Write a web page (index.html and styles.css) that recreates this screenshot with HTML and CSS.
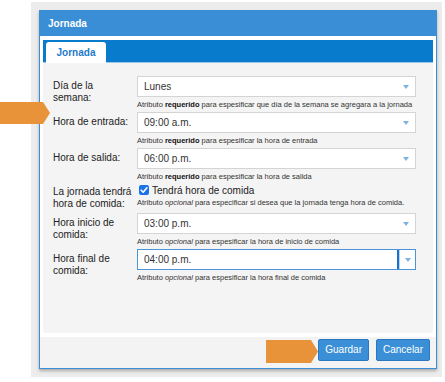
FILE: index.html
```html
<!DOCTYPE html>
<html lang="es">
<head>
<meta charset="utf-8">
<title>Jornada</title>
<link rel="stylesheet" href="styles.css">
</head>
<body>
<div class="stage">
  <div class="frame">
    <div class="dialog">
      <div class="dialog-title">Jornada</div>
      <div class="dialog-body">
        <div class="tabs">
          <div class="tab">Jornada</div>
        </div>
        <div class="panel">
          <div class="row">
            <div class="label">Día de la semana:</div>
            <div class="field">
              <div class="select"><span>Lunes</span><i class="caret"></i></div>
              <div class="help">Atributo <b>requerido</b> para espesificar que día de la semana se agregara a la jornada</div>
            </div>
          </div>
          <div class="row">
            <div class="label">Hora de entrada:</div>
            <div class="field">
              <div class="select"><span>09:00 a.m.</span><i class="caret"></i></div>
              <div class="help">Atributo <b>requerido</b> para espesificar la hora de entrada</div>
            </div>
          </div>
          <div class="row">
            <div class="label">Hora de salida:</div>
            <div class="field">
              <div class="select"><span>06:00 p.m.</span><i class="caret"></i></div>
              <div class="help">Atributo <b>requerido</b> para espesificar la hora de salida</div>
            </div>
          </div>
          <div class="row row-check">
            <div class="label">La jornada tendrá hora de comida:</div>
            <div class="field">
              <label class="check-line"><span class="checkbox"><svg viewBox="0 0 10 10" width="10" height="10"><path d="M2.2 5.2 L4.2 7.2 L7.9 2.8" fill="none" stroke="#fff" stroke-width="1.6" stroke-linecap="round" stroke-linejoin="round"/></svg></span><span>Tendrá hora de comida</span></label>
              <div class="help help-check">Atributo <i>opcional</i> para especificar si desea que la jornada tenga hora de comida.</div>
            </div>
          </div>
          <div class="row">
            <div class="label">Hora inicio de comida:</div>
            <div class="field">
              <div class="select"><span>03:00 p.m.</span><i class="caret"></i></div>
              <div class="help">Atributo <i>opcional</i> para espesificar la hora de inicio de comida</div>
            </div>
          </div>
          <div class="row">
            <div class="label">Hora final de comida:</div>
            <div class="field">
              <div class="select select-focus"><span class="select-text">04:00 p.m.</span><span class="select-btn"><i class="caret"></i></span></div>
              <div class="help">Atributo <i>opcional</i> para espesificar la hora final de comida</div>
            </div>
          </div>
        </div>
      </div>
      <div class="dialog-footer">
        <button class="btn">Guardar</button>
        <button class="btn">Cancelar</button>
      </div>
    </div>
  </div>
  <div class="pointer pointer-left"></div>
  <div class="pointer pointer-footer"></div>
</div>
</body>
</html>
```

FILE: styles.css
```css
* { box-sizing: border-box; }

html, body {
  margin: 0;
  padding: 0;
  background: #ffffff;
}

body {
  font-family: "Liberation Sans", Arial, sans-serif;
  color: #222;
}

.stage {
  position: relative;
  width: 445px;
  height: 382px;
  overflow: hidden;
}

.frame {
  margin: 2px 0 0 31px;
  width: 411px;
  height: 375px;
  padding: 8px 0 0 8px;
  background: #ececec;
}

.dialog {
  width: 398px;
  height: 359px;
  border: 1px solid #3b8fd7;
  background: #ffffff;
  box-shadow: 0 2px 3px rgba(0, 0, 0, 0.28);
  display: flex;
  flex-direction: column;
}

.dialog-title {
  height: 25px;
  line-height: 25px;
  background: #3a8ed6;
  color: #ffffff;
  font-weight: bold;
  font-size: 10px;
  padding-left: 8px;
}

.dialog-body {
  padding: 4px 3px 0 3px;
}

.tabs {
  height: 23px;
  background: #087bcc;
  border-bottom: 1px solid #9cc8ec;
  display: flex;
  align-items: flex-end;
  padding-left: 3px;
}

.tab {
  width: 60px;
  height: 21px;
  margin-bottom: -1px;
  background: #ffffff;
  border-radius: 3px 3px 0 0;
  color: #1f7acb;
  font-weight: bold;
  font-size: 10px;
  line-height: 21px;
  text-align: center;
}

.panel {
  height: 270px;
  background: #f4f4f4;
  border-radius: 0 0 3px 3px;
  padding: 13px 0 0 10px;
}

.row {
  display: grid;
  grid-template-columns: 84px 279px;
}

.label {
  font-size: 10px;
  line-height: 11.5px;
  padding: 4px 4px 0 0;
  color: #222;
}

.row-check .label {
  padding-top: 2px;
}

.select {
  height: 21px;
  border: 1px solid #d4d4d4;
  background: #ffffff;
  display: flex;
  align-items: center;
  padding-left: 6px;
  font-size: 10px;
  color: #333;
}

.caret {
  margin-left: auto;
  margin-right: 6px;
  width: 0;
  height: 0;
  border-left: 3.5px solid transparent;
  border-right: 3.5px solid transparent;
  border-top: 4px solid #7fb2df;
}

.select-focus {
  border-color: #4a94da;
  padding-left: 0;
}

.select-text {
  flex: 1;
  height: 100%;
  display: flex;
  align-items: center;
  padding-left: 6px;
  border-right: 2px solid #1b6fd0;
}

.select-btn {
  width: 16px;
  height: 100%;
  display: flex;
  align-items: center;
  justify-content: center;
  border-left: 1px solid #b9d7f1;
}

.select-btn .caret {
  margin: 0;
}

.help {
  font-size: 7.5px;
  line-height: 11px;
  margin: 2px 0 2px 0;
  color: #333;
  white-space: nowrap;
}

.help b { color: #111; }

.check-line {
  height: 12px;
  display: flex;
  align-items: center;
  gap: 3px;
  padding-left: 2px;
  font-size: 10px;
  color: #222;
}

.checkbox {
  width: 10px;
  height: 10px;
  border-radius: 2px;
  background: #1a73e8;
  display: flex;
}

.help-check {
  margin: 1px 0 5px 0;
}

.dialog-footer {
  margin-top: 4px;
  height: 31px;
  background: #f3f3f3;
  display: flex;
  justify-content: flex-end;
  align-items: flex-start;
  gap: 7px;
  padding: 2px 6px 0 0;
}

.btn {
  height: 22px;
  padding: 0 6px;
  background: #3a8fd6;
  border: 1px solid #2b78c0;
  border-radius: 2px;
  color: #ffffff;
  font-family: "Liberation Sans", Arial, sans-serif;
  font-size: 10px;
  line-height: 20px;
}

.pointer {
  position: absolute;
  background: #e8923a;
}

.pointer-left {
  left: 0;
  top: 102px;
  width: 50px;
  height: 22px;
  clip-path: polygon(0 0, 43px 0, 50px 11px, 43px 22px, 0 22px);
}

.pointer-footer {
  left: 266px;
  top: 340px;
  width: 52px;
  height: 23px;
  clip-path: polygon(0 0, 45px 0, 52px 11.5px, 45px 23px, 0 23px);
}
```
